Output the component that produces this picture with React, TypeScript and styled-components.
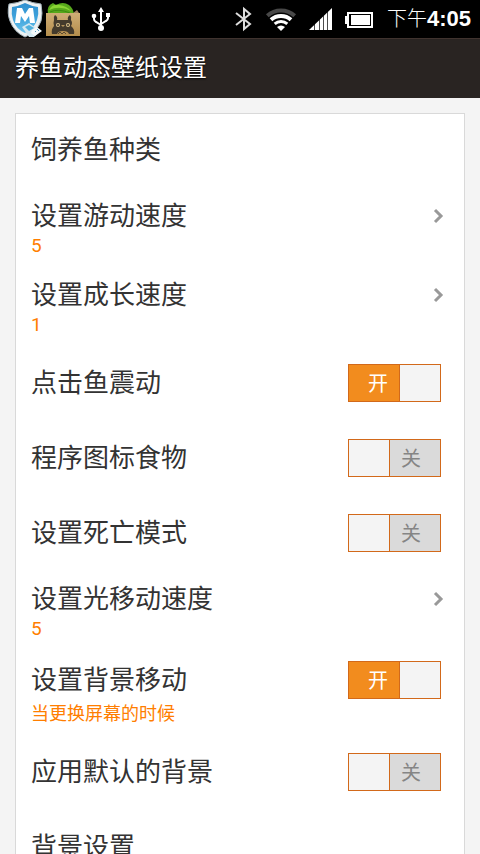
import React, { useState } from "react";
import styled, { createGlobalStyle } from "styled-components";

const GlobalStyle = createGlobalStyle`
  *, *::before, *::after { box-sizing: border-box; }
  body {
    margin: 0;
    background: #f4f4f4;
    font-family: "Liberation Sans", "Noto Sans CJK SC", sans-serif;
  }
`;

const Screen = styled.div`
  display: flex;
  flex-direction: column;
  height: 100vh;
  overflow: hidden;
`;

const StatusBar = styled.div`
  display: flex;
  flex: none;
  align-items: center;
  justify-content: space-between;
  height: 38px;
  padding: 0 9px 0 7px;
  background: #000;
`;

const Notifications = styled.div`
  display: flex;
  align-items: center;
  svg { display: block; }
`;

const Indicators = styled.div`
  display: flex;
  align-items: center;
  gap: 12px;
  svg { display: block; }
`;

const Clock = styled.time`
  display: flex;
  align-items: center;
  margin-left: 2px;
  color: #fff;
  font-size: 20px;
  font-weight: 300;
  line-height: 40px;
  white-space: nowrap;
  strong { font-size: 22px; font-weight: 700; }
`;

const TitleBar = styled.header`
  flex: none;
  height: 60px;
  padding: 0 15px;
  border-top: 1px solid #40332f;
  background: #292422;
`;

const PageTitle = styled.h1`
  margin: 0;
  color: #fff;
  font-size: 24px;
  font-weight: 400;
  line-height: 58px;
  text-shadow: 0 1px 2px #000;
`;

const Content = styled.main`
  flex: 1;
  min-height: 0;
  padding: 15px;
  overflow-y: auto;
  scrollbar-width: none;
`;

const Card = styled.ul`
  margin: 0;
  padding: 0;
  border: 1px solid #d9d9d9;
  background: #fff;
  list-style: none;
`;

const ROW_SHAPE = {
  plain: { height: 75, padding: "0 23px 4px 15px" },
  value: { height: 79, padding: "8px 23px 0 15px" },
  note: { height: 85, padding: "10px 23px 0 15px" },
};

const Row = styled.li<{ $kind: keyof typeof ROW_SHAPE }>`
  display: flex;
  align-items: ${(p) => (p.$kind === "plain" ? "center" : "flex-start")};
  justify-content: space-between;
  min-height: ${(p) => ROW_SHAPE[p.$kind].height}px;
  padding: ${(p) => ROW_SHAPE[p.$kind].padding};
`;

const Labels = styled.div`
  display: flex;
  flex-direction: column;
`;

const Label = styled.label`
  color: #333;
  font-size: 26px;
  line-height: 38px;
`;

const Value = styled.span`
  color: #ff7e00;
  font-family: Roboto, "Noto Sans CJK SC", sans-serif;
  font-size: 19px;
  line-height: 22px;
`;

const Note = styled.span`
  color: #ff7e00;
  font-size: 18px;
  line-height: 30px;
`;

const OpenButton = styled.button`
  display: flex;
  align-items: center;
  justify-content: flex-end;
  width: 38px;
  height: 38px;
  margin-right: -3px;
  padding: 0;
  border: 0;
  background: none;
`;

const Toggle = styled.span<{ $on: boolean }>`
  position: relative;
  display: grid;
  grid-template-columns: ${(p) => (p.$on ? "51px 40px" : "40px 51px")};
  border: 1px solid #d2691a;
  background: #f4f4f4;
`;

const ToggleInput = styled.input`
  position: absolute;
  inset: 0;
  width: 100%;
  height: 100%;
  margin: 0;
  opacity: 0;
`;

const ToggleFace = styled.span<{ $on: boolean }>`
  grid-column: ${(p) => (p.$on ? 1 : 2)};
  height: 36px;
  padding-left: ${(p) => (p.$on ? 19 : 11)}px;
  border-left: ${(p) => (p.$on ? "0" : "1px solid #d2691a")};
  border-right: ${(p) => (p.$on ? "1px solid #d2691a" : "0")};
  background: ${(p) => (p.$on ? "#f28c1e" : "#dadada")};
  color: ${(p) => (p.$on ? "#fff" : "#858585")};
  font-size: 20px;
  line-height: 38px;
`;

const ShieldIcon = () => (
  <svg width="38" height="38" viewBox="0 0 38 38" aria-hidden="true">
    <defs>
      <linearGradient id="shield" x1="0" y1="0" x2="0" y2="1">
        <stop offset="0" stopColor="#2f8fcf" />
        <stop offset="0.5" stopColor="#3fa3dc" />
        <stop offset="1" stopColor="#6cc4ec" />
      </linearGradient>
    </defs>
    <path d="M2 4Q11 3 18 0Q25 3 34 4Q36 14 34 21Q30 32 18 37Q7 32 3 21Q0 14 2 4Z" fill="#eef1f2" stroke="#a5b4bc" />
    <path d="M5 7Q12 6 18 3Q24 6 31 7Q32 14 30 20Q27 29 18 33Q9 29 6 20Q4 14 5 7Z" fill="url(#shield)" />
    <path d="M8 23L10 8H15L18 14L22 8H26L28 23H23L22 16L18 22L14 16L13 23Z" fill="#fff" />
    <path d="M15 27L22 23L33 31L27 37H22Z" fill="#d3e8f1" />
    <path d="M18 27L22 25L27 28L22 31Z" fill="#4fb0dd" />
    <path d="M25 30L30 27L35 31L28 36L24 33Z" fill="#f4f8fa" />
    <path d="M28 31L29 32M30 29L32 31" stroke="#4f97bb" />
  </svg>
);

const FolderIcon = () => (
  <svg width="36" height="38" viewBox="0 0 36 38" aria-hidden="true">
    <defs>
      <linearGradient id="folder" x1="0" y1="0" x2="0" y2="1">
        <stop offset="0" stopColor="#cfae76" />
        <stop offset="1" stopColor="#b58d4c" />
      </linearGradient>
    </defs>
    <path d="M28 13L32 10L34 13Z" fill="#a58660" />
    <path d="M3 14Q1 6 8 3L11 5Q18 1 24 5Q28 8 29 14Z" fill="#57a81b" />
    <path d="M4 10Q7 4 14 5Q22 6 26 11Q15 5 4 10Z" fill="#8ad434" />
    <path d="M5 12Q13 8 25 13" fill="none" stroke="#3d8a12" />
    <path d="M1 13H35V36H1Z" fill="url(#folder)" />
    <path d="M7 34Q6 29 9 26Q8 23 9 20Q8 17 10 15Q13 17 12 20H23Q22 17 25 15Q27 17 26 20Q28 23 26 26Q30 29 29 34H24Q23 31 18 31Q13 31 12 34Z" fill="#443a2c" />
    <circle cx="13" cy="25" r="2" fill="#d8c08c" />
    <circle cx="23" cy="25" r="2" fill="#d8c08c" />
    <circle cx="13" cy="25" r="1" fill="#443a2c" />
    <circle cx="23" cy="25" r="1" fill="#443a2c" />
    <path d="M16 25H20L18 27Z" fill="#b5935a" />
    <path d="M13 34L15 32L17 34L19 32L21 34" fill="none" stroke="#5b4a33" />
  </svg>
);

const UsbIcon = () => (
  <svg width="38" height="38" viewBox="0 0 38 38" fill="none" stroke="#fff" strokeWidth="2" aria-hidden="true">
    <path d="M20 10V28M13 17V19Q13 21 15 22L20 25M27 16V18Q27 20 25 21L20 24" />
    <path d="M17 12L20 7L23 12ZM25 13H29V17H25Z" fill="#fff" stroke="none" />
    <circle cx="13" cy="16" r="2.3" fill="#fff" stroke="none" />
    <circle cx="20" cy="28" r="3" fill="#fff" stroke="none" />
  </svg>
);

const BluetoothIcon = () => (
  <svg width="20" height="38" viewBox="0 0 20 38" fill="none" stroke="#ddd" strokeWidth="2" aria-hidden="true">
    <path d="M3 13L17 24L11 29V9L17 14L3 25" />
  </svg>
);

const WifiIcon = () => (
  <svg width="32" height="38" viewBox="0 0 32 38" fill="none" strokeWidth="4" aria-hidden="true">
    <path d="M2.3 15.8A20.5 20.5 0 0 1 29.7 15.8" stroke="#484848" />
    <path d="M6 19.8A15 15 0 0 1 26 19.8" stroke="#fff" />
    <path d="M9.7 23.9A9.5 9.5 0 0 1 22.3 23.9" stroke="#fff" strokeWidth="3" />
    <path d="M12 27A6 6 0 0 1 20 27L16 31Z" fill="#fff" />
  </svg>
);

const SignalIcon = () => (
  <svg width="24" height="38" viewBox="0 0 24 38" aria-hidden="true">
    <path d="M0 30L23 8V30Z" fill="#fff" />
    <path d="M5.5 24V30M10.5 19V30M14.5 15V30M18.5 11V30" stroke="#000" strokeOpacity="0.7" />
  </svg>
);

const BatteryIcon = () => (
  <svg width="28" height="38" viewBox="0 0 28 38" aria-hidden="true">
    <path d="M2 12H28V28H2V24H0V16H2Z" fill="#fff" />
    <path d="M4 14H26V26H4Z" fill="#000" />
    <path d="M6 15H25V25H6Z" fill="#fff" />
  </svg>
);

const ChevronIcon = () => (
  <svg width="11" height="16" viewBox="0 0 11 16" fill="none" stroke="#999" strokeWidth="3" aria-hidden="true">
    <path d="M2 2L8 8L2 14" />
  </svg>
);

type Setting = {
  id: string;
  label: string;
  value?: string;
  note?: string;
  on?: boolean;
};

const SETTINGS: Setting[] = [
  { id: "species", label: "饲养鱼种类" },
  { id: "swim", label: "设置游动速度", value: "5" },
  { id: "growth", label: "设置成长速度", value: "1" },
  { id: "vibrate", label: "点击鱼震动", on: true },
  { id: "food", label: "程序图标食物", on: false },
  { id: "death", label: "设置死亡模式", on: false },
  { id: "light", label: "设置光移动速度", value: "5" },
  { id: "scroll", label: "设置背景移动", note: "当更换屏幕的时候", on: true },
  { id: "default-bg", label: "应用默认的背景", on: false },
  { id: "background", label: "背景设置" },
];

const SettingRow = ({ id, label, value, note, on }: Setting) => {
  const [checked, setChecked] = useState(Boolean(on));
  const kind = value ? "value" : note ? "note" : "plain";
  const isControl = on !== undefined || value !== undefined;
  return (
    <Row $kind={kind}>
      <Labels>
        <Label as={isControl ? "label" : "span"} htmlFor={isControl ? id : undefined}>
          {label}
        </Label>
        {value && <Value>{value}</Value>}
        {note && <Note>{note}</Note>}
      </Labels>
      {value && (
        <OpenButton id={id} type="button">
          <ChevronIcon />
        </OpenButton>
      )}
      {on !== undefined && (
        <Toggle $on={checked}>
          <ToggleFace $on={checked}>{checked ? "开" : "关"}</ToggleFace>
          <ToggleInput
            id={id}
            type="checkbox"
            role="switch"
            checked={checked}
            onChange={(e) => setChecked(e.target.checked)}
          />
        </Toggle>
      )}
    </Row>
  );
};

export default function App() {
  return (
    <Screen>
      <GlobalStyle />
      <StatusBar>
        <Notifications>
          <ShieldIcon />
          <FolderIcon />
          <UsbIcon />
        </Notifications>
        <Indicators>
          <BluetoothIcon />
          <WifiIcon />
          <SignalIcon />
          <BatteryIcon />
          <Clock>
            下午<strong>4:05</strong>
          </Clock>
        </Indicators>
      </StatusBar>
      <TitleBar>
        <PageTitle>养鱼动态壁纸设置</PageTitle>
      </TitleBar>
      <Content>
        <Card>
          {SETTINGS.map((s) => (
            <SettingRow key={s.id} {...s} />
          ))}
        </Card>
      </Content>
    </Screen>
  );
}
